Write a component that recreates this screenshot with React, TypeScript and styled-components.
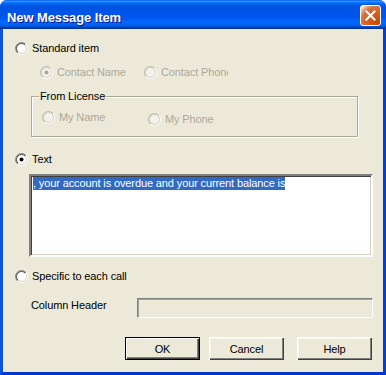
import React, { useId } from "react";
import styled, { createGlobalStyle } from "styled-components";

const Global = createGlobalStyle`
  html, body { margin: 0; padding: 0; background: #ffffff; }
  body { font-family: "Liberation Sans", Arial, sans-serif; }
  * { box-sizing: border-box; }
`;

const Window = styled.div`
  width: 386px;
  height: 375px;
  display: flex;
  flex-direction: column;
  border-radius: 7px 7px 0 0;
  overflow: hidden;
  background: #0831d9;
`;

const TitleBar = styled.div`
  height: 29px;
  flex: none;
  display: flex;
  align-items: flex-start;
  justify-content: space-between;
  padding: 0 5px 0 7px;
  background: linear-gradient(
    180deg,
    #0058ee 0%,
    #3593ff 4%,
    #288eff 6%,
    #127dff 8%,
    #036ffc 10%,
    #0262ee 14%,
    #0057e5 20%,
    #0054e3 24%,
    #0055eb 56%,
    #005bf5 66%,
    #026afe 76%,
    #0062ef 86%,
    #0052d6 92%,
    #0040ab 94%,
    #003092 100%
  );
`;

const TitleText = styled.span`
  font-family: "Liberation Sans", Arial, sans-serif;
  font-weight: bold;
  font-size: 13px;
  line-height: 29px;
  padding-top: 3px;
  color: #ffffff;
  text-shadow: 1px 1px #0f1089;
  letter-spacing: -0.1px;
`;

const CloseButton = styled.div`
  width: 21px;
  height: 21px;
  margin-top: 5px;
  border: 1px solid #ffffff;
  border-radius: 3px;
  display: flex;
  align-items: center;
  justify-content: center;
  background: radial-gradient(
    circle at 90% 90%,
    #cc4600 0%,
    #dc6527 55%,
    #cd7546 70%,
    #ffccb2 90%,
    #ffffff 100%
  );
`;

const Frame = styled.div`
  flex: 1;
  display: flex;
  border-left: 3px solid #0855dd;
  border-right: 3px solid #0440d0;
  border-bottom: 3px solid #0636c8;
`;

const Body = styled.div`
  flex: 1;
  background: #ece9d8;
  display: flex;
  flex-direction: column;
  padding: 13px 0 0 12px;
  font-size: 11px;
  line-height: 13px;
  letter-spacing: -0.12px;
  color: #000000;
`;

const OptionRow = styled.div<{ $top: number }>`
  display: flex;
  align-items: center;
  gap: 4px;
  height: 13px;
  margin-top: ${(p) => p.$top}px;
`;

const SubRow = styled.div`
  display: flex;
  align-items: flex-start;
  margin-top: 11px;
  padding-left: 25px;
`;

const Option = styled.div<{ $width: number; $drop?: number }>`
  display: flex;
  align-items: center;
  gap: 4px;
  width: ${(p) => p.$width}px;
  height: 13px;
  margin-top: ${(p) => p.$drop ?? 0}px;
  overflow: hidden;
  white-space: nowrap;
  flex: none;
`;

const Label = styled.span<{ $disabled?: boolean }>`
  color: ${(p) => (p.$disabled ? "#aca899" : "#000000")};
  white-space: nowrap;
`;

const Group = styled.fieldset`
  margin: 11px 0 0 16px;
  width: 327px;
  padding: 8px 0 10px 10px;
  border: 1px solid #aca899;
  box-shadow: inset 1px 1px 0 #ffffff, 1px 1px 0 #ffffff;
  display: flex;
  align-items: flex-start;
`;

const Legend = styled.legend`
  padding: 0 1px;
  margin-left: -3px;
  background: #ece9d8;
  color: #000000;
  line-height: 13px;
`;

const GroupRow = styled.div`
  display: flex;
  align-items: flex-start;
`;

const EditBox = styled.div`
  margin: 8px 0 0 14px;
  width: 344px;
  height: 83px;
  background: #ffffff;
  padding: 1px 2px;
  border-style: solid;
  border-width: 2px;
  border-color: #808080 #ffffff #ffffff #808080;
  box-shadow: inset 1px 1px 0 #404040, inset -1px -1px 0 #d4d0c8;
  white-space: nowrap;
  overflow: hidden;
`;

const Selection = styled.span`
  background: #316ac5;
  color: #ffffff;
  display: inline-block;
  height: 13px;
`;

const FieldRow = styled.div`
  display: flex;
  align-items: flex-start;
  margin-top: 15px;
  padding-left: 16px;
`;

const FieldLabel = styled.span`
  width: 106px;
  margin-top: 1px;
  flex: none;
`;

const DisabledInput = styled.div`
  width: 236px;
  height: 20px;
  background: #ece9d8;
  border-style: solid;
  border-width: 1px;
  border-color: #808080 #ffffff #ffffff #808080;
  box-shadow: inset 1px 1px 0 #a0a0a0, inset -1px -1px 0 #e8e6dc;
`;

const ButtonRow = styled.div`
  display: flex;
  justify-content: flex-end;
  gap: 9px;
  margin-top: 19px;
  padding-right: 11px;
`;

const Button = styled.div<{ $default?: boolean; $spaced?: boolean }>`
  width: 75px;
  height: 23px;
  display: flex;
  align-items: center;
  justify-content: center;
  background: #ece9d8;
  margin-left: ${(p) => (p.$spaced ? 4 : 0)}px;
  padding-top: 1px;
  border: ${(p) => (p.$default ? "1px solid #000000" : "none")};
  box-shadow: ${(p) =>
    p.$default
      ? "inset 1px 1px 0 #ffffff, inset -1px -1px 0 #404040, inset -2px -2px 0 #808080"
      : "inset 1px 1px 0 #ffffff, inset -1px -1px 0 #404040, inset -2px -2px 0 #808080, inset 2px 2px 0 #f4f3ee"};
`;

const Radio: React.FC<{ checked?: boolean; disabled?: boolean }> = ({
  checked,
  disabled,
}) => {
  const raw = useId();
  const id = raw.replace(/[^a-zA-Z0-9]/g, "");
  const outerDark = disabled ? "#b8b6aa" : "#808080";
  const innerDark = disabled ? "#cfcdc2" : "#404040";
  const fill = disabled ? "#f2f1ea" : "#ffffff";
  const dot = disabled ? "#aca899" : "#000000";
  return (
    <svg width="13" height="13" viewBox="0 0 13 13" style={{ flex: "none" }}>
      <defs>
        <linearGradient id={`o${id}`} x1="0" y1="0" x2="1" y2="1">
          <stop offset="0.5" stopColor={outerDark} />
          <stop offset="0.5" stopColor="#ffffff" />
        </linearGradient>
        <linearGradient id={`i${id}`} x1="0" y1="0" x2="1" y2="1">
          <stop offset="0.5" stopColor={innerDark} />
          <stop offset="0.5" stopColor="#d4d0c8" />
        </linearGradient>
      </defs>
      <circle cx="6.5" cy="6.5" r="6" fill="none" stroke={`url(#o${id})`} />
      <circle cx="6.5" cy="6.5" r="5" fill={fill} stroke={`url(#i${id})`} />
      {checked && <circle cx="6.5" cy="6.5" r="2" fill={dot} />}
    </svg>
  );
};

export default function App() {
  return (
    <>
      <Global />
      <Window>
        <TitleBar>
          <TitleText>New Message Item</TitleText>
          <CloseButton>
            <svg width="11" height="11" viewBox="0 0 11 11">
              <path
                d="M1.5 1.5 L9.5 9.5 M9.5 1.5 L1.5 9.5"
                stroke="#ffffff"
                strokeWidth="2"
                strokeLinecap="square"
              />
            </svg>
          </CloseButton>
        </TitleBar>
        <Frame>
          <Body>
            <OptionRow $top={0}>
              <Radio />
              <Label>Standard item</Label>
            </OptionRow>
            <SubRow>
              <Option $width={104}>
                <Radio checked disabled />
                <Label $disabled>Contact Name</Label>
              </Option>
              <Option $width={84}>
                <Radio disabled />
                <Label $disabled>Contact Phone</Label>
              </Option>
            </SubRow>
            <Group>
              <Legend>From License</Legend>
              <GroupRow>
                <Option $width={106}>
                  <Radio disabled />
                  <Label $disabled>My Name</Label>
                </Option>
                <Option $width={100} $drop={2}>
                  <Radio disabled />
                  <Label $disabled>My Phone</Label>
                </Option>
              </GroupRow>
            </Group>
            <OptionRow $top={16}>
              <Radio checked />
              <Label>Text</Label>
            </OptionRow>
            <EditBox>
              <Selection>, your account is overdue and your current balance is</Selection>
            </EditBox>
            <OptionRow $top={13}>
              <Radio />
              <Label>Specific to each call</Label>
            </OptionRow>
            <FieldRow>
              <FieldLabel>Column Header</FieldLabel>
              <DisabledInput />
            </FieldRow>
            <ButtonRow>
              <Button $default>OK</Button>
              <Button>Cancel</Button>
              <Button $spaced>Help</Button>
            </ButtonRow>
          </Body>
        </Frame>
      </Window>
    </>
  );
}
